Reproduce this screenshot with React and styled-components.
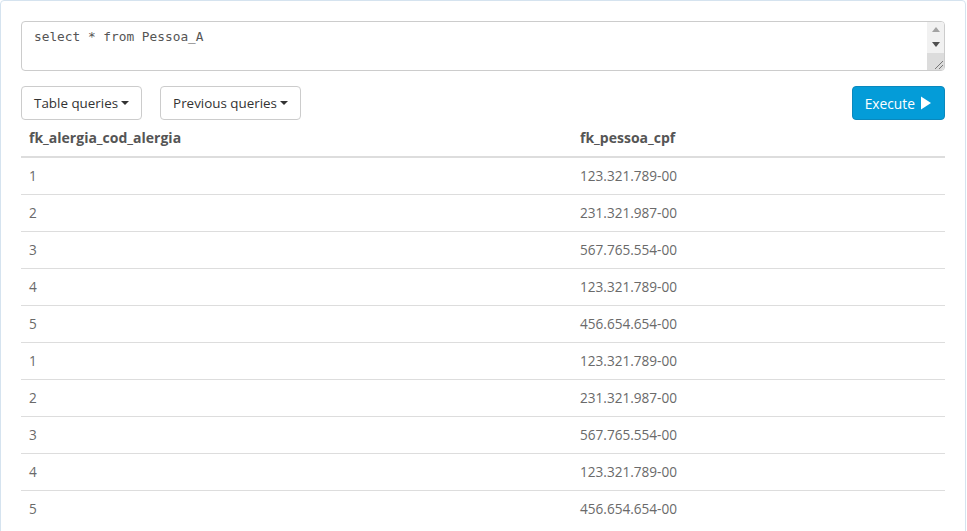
import React from "react";
import styled, { createGlobalStyle } from "styled-components";

const Global = createGlobalStyle`
  html, body { margin: 0; padding: 0; overflow: hidden; background: #fff; }
  body { font-family: "Open Sans", "Noto Sans", sans-serif; font-size: 13px; color: #666; }
`;

const Panel = styled.div`
  width: 966px;
  box-sizing: border-box;
  border: 1px solid #d5e3ef;
  border-radius: 4px;
  padding: 20px;
  background: #fff;
`;

const EditorWrap = styled.div`
  position: relative;
  margin: 0 0 15px;
`;

const Editor = styled.textarea`
  display: block;
  box-sizing: border-box;
  width: 100%;
  height: 50px;
  margin: 0;
  padding: 6px 30px 6px 12px;
  border: 1px solid #ccc;
  border-radius: 4px;
  font-family: "DejaVu Sans Mono", "Liberation Mono", monospace;
  font-size: 12.8px;
  line-height: 18px;
  color: #555;
  overflow: hidden;
  resize: none;
  outline: none;
`;

const ScrollBar = styled.div`
  position: absolute;
  top: 1px;
  right: 1px;
  bottom: 1px;
  width: 17px;
  display: flex;
  flex-direction: column;
  background: #f1f1f1;
  border-radius: 0 3px 3px 0;
  overflow: hidden;
`;

const Arrow = styled.div`
  height: 15px;
  display: flex;
  align-items: center;
  justify-content: center;
`;

const Corner = styled.div`
  margin-top: auto;
  height: 17px;
  background: #dcdcdc;
  display: flex;
  align-items: flex-end;
  justify-content: flex-end;
`;

const Toolbar = styled.div`
  display: flex;
  align-items: center;
  gap: 18px;
`;

const Button = styled.button`
  display: inline-flex;
  align-items: center;
  box-sizing: border-box;
  height: 34px;
  padding: 0 12px;
  border: 1px solid ${(p) => (p.$primary ? "#0a88bd" : "#ccc")};
  border-radius: 4px;
  background: ${(p) => (p.$primary ? "#049cd8" : "#fff")};
  color: ${(p) => (p.$primary ? "#fff" : "#333")};
  font-family: "Open Sans", "Noto Sans", sans-serif;
  font-size: ${(p) => (p.$primary ? "13.8px" : "13.4px")};
  cursor: pointer;
  margin-left: ${(p) => (p.$push ? "auto" : "0")};
`;

const Caret = styled.span`
  display: inline-block;
  width: 0;
  height: 0;
  margin-left: 3px;
  border-top: 4px solid #333;
  border-left: 4px solid transparent;
  border-right: 4px solid transparent;
`;

const Table = styled.table`
  width: 100%;
  border-collapse: collapse;
  table-layout: fixed;
`;

const Th = styled.th`
  text-align: left;
  padding: 8px;
  line-height: 20px;
  font-size: 14px;
  font-weight: 700;
  color: #555;
  border-bottom: 2px solid #ddd;
`;

const Td = styled.td`
  padding: 8px;
  line-height: 20px;
  font-size: 13.6px;
  color: #6a6a6a;
  border-top: ${(p) => (p.$first ? "0" : "1px solid #ddd")};
`;

const rows = [
  [1, "123.321.789-00"],
  [2, "231.321.987-00"],
  [3, "567.765.554-00"],
  [4, "123.321.789-00"],
  [5, "456.654.654-00"],
  [1, "123.321.789-00"],
  [2, "231.321.987-00"],
  [3, "567.765.554-00"],
  [4, "123.321.789-00"],
  [5, "456.654.654-00"],
];

export default function App() {
  return (
    <>
      <Global />
      <Panel>
        <EditorWrap>
          <Editor defaultValue="select * from Pessoa_A" spellCheck={false} />
          <ScrollBar aria-hidden="true">
            <Arrow>
              <svg width="8" height="5" viewBox="0 0 8 5">
                <path d="M0 5 L4 0 L8 5 Z" fill="#a3a3a3" />
              </svg>
            </Arrow>
            <Arrow>
              <svg width="8" height="5" viewBox="0 0 8 5">
                <path d="M0 0 L4 5 L8 0 Z" fill="#505050" />
              </svg>
            </Arrow>
            <Corner>
              <svg width="10" height="10" viewBox="0 0 10 10">
                <path d="M9 1 L1 9 M9 5 L5 9" stroke="#777" strokeWidth="1" />
              </svg>
            </Corner>
          </ScrollBar>
        </EditorWrap>
        <Toolbar>
          <Button>
            Table queries<Caret />
          </Button>
          <Button>
            Previous queries<Caret />
          </Button>
          <Button $primary $push>
            Execute
            <svg width="12" height="14" viewBox="0 0 12 14" style={{ marginLeft: 5 }}>
              <path d="M1 0.5 L11 7 L1 13.5 Z" fill="#fff" />
            </svg>
          </Button>
        </Toolbar>
        <Table>
          <colgroup>
            <col style={{ width: 551 }} />
            <col />
          </colgroup>
          <thead>
            <tr>
              <Th>fk_alergia_cod_alergia</Th>
              <Th>fk_pessoa_cpf</Th>
            </tr>
          </thead>
          <tbody>
            {rows.map((r, i) => (
              <tr key={i}>
                <Td $first={i === 0}>{r[0]}</Td>
                <Td $first={i === 0}>{r[1]}</Td>
              </tr>
            ))}
          </tbody>
        </Table>
      </Panel>
    </>
  );
}
